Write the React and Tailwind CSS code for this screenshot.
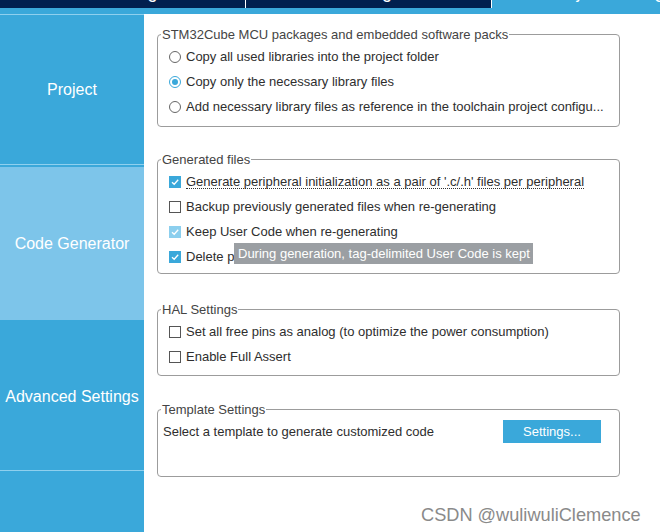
import React from 'react';

const FONT = { fontFamily: '"Liberation Sans", Arial, sans-serif' };

const tabs = [
  { label: 'Pinout & Configuration', active: false },
  { label: 'Clock Configuration', active: false },
  { label: 'Project Manager', active: true },
];

function Radio({ checked }) {
  return (
    <span
      className={`flex h-[12px] w-[12px] shrink-0 items-center justify-center rounded-full border bg-white ${
        checked ? 'border-[#3aa8da]' : 'border-[#666]'
      }`}
    >
      {checked && <span className="h-[6px] w-[6px] rounded-full bg-[#3aa8da]" />}
    </span>
  );
}

function Check({ checked, disabled }) {
  if (!checked) {
    return <span className="h-[12px] w-[12px] shrink-0 border border-[#555] bg-white" />;
  }
  return (
    <span
      className={`flex h-[12px] w-[12px] shrink-0 items-center justify-center ${
        disabled ? 'bg-[#8ccfee]' : 'bg-[#3aa8da]'
      }`}
    >
      <svg width="10" height="10" viewBox="0 0 10 10" fill="none">
        <path d="M2 5.2 L4.2 7.3 L8.2 2.8" stroke="white" strokeWidth="1.3" />
      </svg>
    </span>
  );
}

function Row({ children }) {
  return <div className="ml-[8px] flex h-[25px] items-center gap-[5px]">{children}</div>;
}

function Group({ title, className = '', children }) {
  return (
    <fieldset
      className={`w-[463px] rounded-[4px] border border-[#9c9c9c] pl-[3px] pt-[2px] ${className}`}
    >
      <legend className="px-[1px] text-[13px] leading-[15px] text-[#444]">{title}</legend>
      {children}
    </fieldset>
  );
}

export default function App() {
  return (
    <div className="relative h-[532px] w-[660px] overflow-hidden bg-white" style={FONT}>
      {/* top tab strip, mostly scrolled off */}
      <div className="flex h-[8px] overflow-hidden bg-[#3aa8da]">
        {tabs.map((t) => (
          <div
            key={t.label}
            className={`flex h-[8px] w-[246px] shrink-0 items-start justify-center overflow-hidden border-r border-white ${
              t.active ? 'bg-[#3aa8da]' : 'bg-[#01204f]'
            }`}
          >
            <span className="-mt-[17px] block whitespace-nowrap text-[18px] leading-[18px] text-white">
              {t.label}
            </span>
          </div>
        ))}
      </div>
      <div className="h-[6px] bg-[#3aa8da]" />

      <div className="flex">
        {/* sidebar */}
        <div className="flex h-[518px] w-[144px] shrink-0 flex-col bg-[#3aa8da] text-[16px] text-white">
          <div className="h-[1px] bg-[#8fd0ee]" />
          <div className="flex h-[149px] items-center justify-center pt-[1px]">Project</div>
          <div className="h-[1px] bg-[#8fd0ee]" />
          <div className="h-[2px]" />
          <div className="flex h-[153px] items-center justify-center bg-[#7dc5ea]">Code Generator</div>
          <div className="flex h-[150px] items-center justify-center pt-[3px]">Advanced Settings</div>
          <div className="h-[1px] bg-[#8fd0ee]" />
        </div>

        {/* content */}
        <div className="relative flex-1 pl-[13px] pt-[13px] text-[13px] text-[#2e2e2e]">
          <Group title="STM32Cube MCU packages and embedded software packs" className="pb-[7px]">
            <Row>
              <Radio />
              <span>Copy all used libraries into the project folder</span>
            </Row>
            <Row>
              <Radio checked />
              <span>Copy only the necessary library files</span>
            </Row>
            <Row>
              <Radio />
              <span>Add necessary library files as reference in the toolchain project configu...</span>
            </Row>
          </Group>

          <Group title="Generated files" className="mt-[25px] pb-[4px]">
            <Row>
              <Check checked />
              <span className="border-b border-dotted border-[#333] leading-[13px]">
                Generate peripheral initialization as a pair of '.c/.h' files per peripheral
              </span>
            </Row>
            <Row>
              <Check />
              <span>Backup previously generated files when re-generating</span>
            </Row>
            <Row>
              <Check checked disabled />
              <span>Keep User Code when re-generating</span>
            </Row>
            <Row>
              <Check checked />
              <span>Delete previously generated files when not re-generated</span>
            </Row>
          </Group>

          <Group title="HAL Settings" className="mt-[28px] pb-[6px]">
            <Row>
              <Check />
              <span>Set all free pins as analog (to optimize the power consumption)</span>
            </Row>
            <Row>
              <Check />
              <span>Enable Full Assert</span>
            </Row>
          </Group>

          <Group title="Template Settings" className="mt-[26px] pb-[32px]">
            <div className="ml-[2px] flex h-[25px] items-center justify-between pr-[18px]">
              <span>Select a template to generate customized code</span>
              <button
                type="button"
                className="flex h-[23px] w-[98px] items-center justify-center bg-[#3aa8da] text-[13px] text-white"
              >
                Settings...
              </button>
            </div>
          </Group>

          {/* tooltip */}
          <div className="absolute left-[90px] top-[229px] flex h-[21px] w-[299px] items-center bg-[#9b9fa3] pl-[4px] text-[13px] text-white">
            During generation, tag-delimited User Code is kept
          </div>
        </div>
      </div>

      <div className="absolute left-[421px] top-[504px] text-[18.2px] leading-[22px] text-[#8a8a8a]">
        CSDN @wuliwuliClemence
      </div>
    </div>
  );
}
